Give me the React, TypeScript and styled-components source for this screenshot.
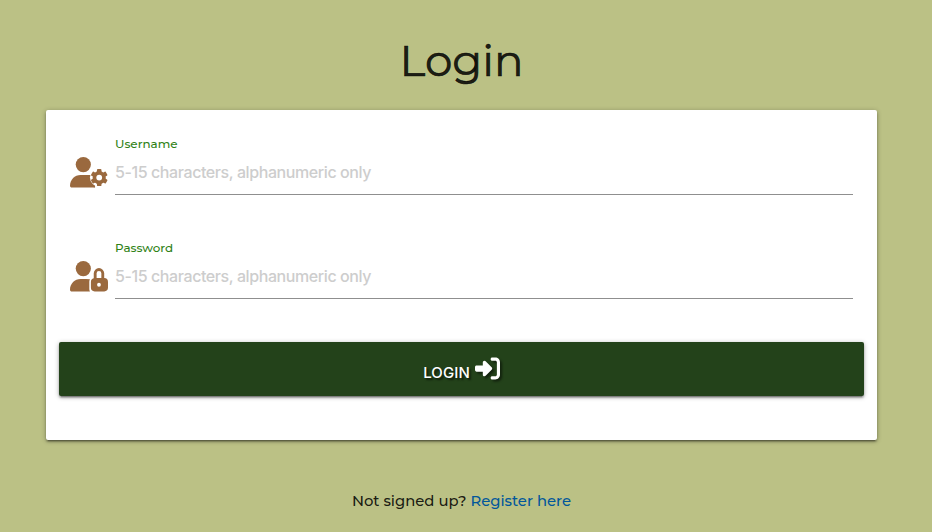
import React from "react";
import styled, { createGlobalStyle } from "styled-components";
import { FaRightToBracket } from "react-icons/fa6";

const Global = createGlobalStyle`
  *, *::before, *::after { box-sizing: border-box; }
  body { margin: 0; background: #bbc185; color: rgba(0,0,0,.87); }
`;
const Page = styled.main`
  height: 532px; padding: 0 55px 0 46px; overflow: hidden;
  display: flex; flex-direction: column; align-items: center;
`;
const Title = styled.h1`
  margin: 36px 0 0; height: 74px; font: 400 43.7px/49px Montserrat, Inter, sans-serif;
  -webkit-text-stroke: 0.6px currentColor;
`;
const Card = styled.form`
  width: 831px; height: 330px; padding: 24px 13px 0; background: #fff; border-radius: 2px;
  box-shadow: 0 2px 2px 0 rgba(0,0,0,.24), 0 3px 1px -2px rgba(0,0,0,.22), 0 1px 5px 0 rgba(0,0,0,.3);
`;
const Field = styled.div`
  display: grid; grid-template-columns: 45px 738px; height: 104px; padding-left: 11px;
  svg { width: 38px; height: 30.4px; margin-top: 23px; color: #9a693e; overflow: visible; }
`;
const Label = styled.label`
  display: block; font: 500 11.9px/20px Montserrat, Inter, sans-serif; color: #2f8216;
`;
const Input = styled.input`
  display: block; width: 738px; height: 41px; padding: 0 0 4px; border: 0; border-bottom: 1px solid #8f8f8f;
  background: transparent; outline: 0; font: 500 16px Inter, sans-serif; letter-spacing: -0.41px;
  &::placeholder { color: #cdcdcd; opacity: 1; }
`;
const Button = styled.button`
  display: flex; align-items: center; justify-content: center; gap: 5px; width: 805px; height: 54px; padding: 0; border: 0;
  border-radius: 2px; background: #23421a; color: #fff; font: 500 15px Inter, sans-serif;
  box-shadow: 0 2px 2px 0 rgba(0,0,0,.24), 0 3px 1px -2px rgba(0,0,0,.22), 0 1px 5px 0 rgba(0,0,0,.3);
  text-shadow: 2px 2px 2px rgba(0,0,0,.6);
  span { padding-top: 6px; letter-spacing: 0.1px; }
  svg { width: 25px; height: 25px; margin-bottom: 1px; filter: drop-shadow(2px 2px 1px rgba(0,0,0,.5)); }
`;
const Foot = styled.p`
  margin: 50px 0 0; font: 500 14.8px/22px Montserrat, Inter, sans-serif;
  a { color: #01579b; text-decoration: none; }
`;

function UserGear() {
  return (
    <svg viewBox="0 0 640 512" fill="currentColor">
      <circle cx="224" cy="128" r="128" />
      <path d="M178.300 304C79.800 304 0 383.800 0 482.300C0 498.700 13.300 512 29.700 512H404Q420 512 420 496V304Z" />
      <circle cx="492" cy="346" r="156" fill="#fff" />
      <path d="M340 420L380 470Q402 490 422 488V512H404Z" />
      <circle cx="492" cy="346" r="80" fill="none" stroke="currentColor" strokeWidth="62" />
      {[0, 60, 120, 180, 240, 300].map((angle) => (
        <rect key={angle} x="454" y="202" width="76" height="70" rx="16" transform={`rotate(${angle} 492 346)`} />
      ))}
    </svg>
  );
}

function UserLock() {
  return (
    <svg viewBox="0 0 640 512" fill="currentColor">
      <circle cx="224" cy="128" r="128" />
      <path d="M178.300 304C79.800 304 0 383.800 0 482.300C0 498.700 13.300 512 29.700 512H336Q325 495 325 470V350Q325 326 336 308Q304 304 269.700 304Z" />
      <path fillRule="evenodd" d="M400 288V208a88 88 0 0 1 176 0v80a64 64 0 0 1 64 64v96a64 64 0 0 1-64 64H416a64 64 0 0 1-64-64v-96a64 64 0 0 1 48-62zM448 288h80v-80a40 40 0 0 0-80 0zM488 368a32 32 0 1 0 0 64a32 32 0 0 0 0-64z" />
    </svg>
  );
}

export default function App() {
  return (
    <>
      <Global />
      <Page>
        <Title>Login</Title>
        <Card>
          <Field><UserGear /><div><Label>Username</Label><Input placeholder="5-15 characters, alphanumeric only" /></div></Field>
          <Field><UserLock /><div><Label>Password</Label><Input placeholder="5-15 characters, alphanumeric only" /></div></Field>
          <Button type="button"><span>LOGIN</span><FaRightToBracket /></Button>
        </Card>
        <Foot>Not signed up? <a href="#">Register here</a></Foot>
      </Page>
    </>
  );
}
